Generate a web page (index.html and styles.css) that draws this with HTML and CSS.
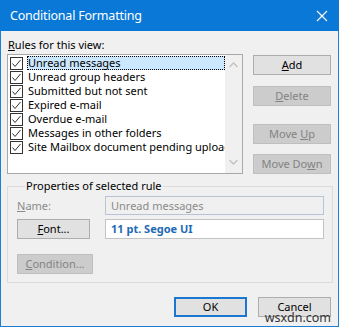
FILE: index.html
```html
<!DOCTYPE html>
<html>
<head>
<meta charset="utf-8">
<link rel="stylesheet" href="styles.css">
</head>
<body>
<div class="window">
  <div class="titlebar">
    <span class="title">Conditional Formatting</span>
    <svg class="close" width="12" height="12" viewBox="0 0 12 12"><path d="M1 1 L11 11 M11 1 L1 11" stroke="#fff" stroke-width="1.2" fill="none"/></svg>
  </div>
  <div class="content">
    <div class="top">
      <div class="rules">
        <div class="label"><u>R</u>ules for this view:</div>
        <div class="listbox">
          <div class="items">
            <div class="item selected"><span class="cb"><svg viewBox="0 0 13 13" width="13" height="13"><path d="M2.5 6.5 L5 9.5 L10.5 3" stroke="#333" stroke-width="1" fill="none"/></svg></span><span class="txt">Unread messages</span></div>
            <div class="item"><span class="cb"><svg viewBox="0 0 13 13" width="13" height="13"><path d="M2.5 6.5 L5 9.5 L10.5 3" stroke="#333" stroke-width="1" fill="none"/></svg></span><span class="txt">Unread group headers</span></div>
            <div class="item"><span class="cb"><svg viewBox="0 0 13 13" width="13" height="13"><path d="M2.5 6.5 L5 9.5 L10.5 3" stroke="#333" stroke-width="1" fill="none"/></svg></span><span class="txt">Submitted but not sent</span></div>
            <div class="item"><span class="cb"><svg viewBox="0 0 13 13" width="13" height="13"><path d="M2.5 6.5 L5 9.5 L10.5 3" stroke="#333" stroke-width="1" fill="none"/></svg></span><span class="txt">Expired e-mail</span></div>
            <div class="item"><span class="cb"><svg viewBox="0 0 13 13" width="13" height="13"><path d="M2.5 6.5 L5 9.5 L10.5 3" stroke="#333" stroke-width="1" fill="none"/></svg></span><span class="txt">Overdue e-mail</span></div>
            <div class="item"><span class="cb"><svg viewBox="0 0 13 13" width="13" height="13"><path d="M2.5 6.5 L5 9.5 L10.5 3" stroke="#333" stroke-width="1" fill="none"/></svg></span><span class="txt">Messages in other folders</span></div>
            <div class="item"><span class="cb"><svg viewBox="0 0 13 13" width="13" height="13"><path d="M2.5 6.5 L5 9.5 L10.5 3" stroke="#333" stroke-width="1" fill="none"/></svg></span><span class="txt">Site Mailbox document pending upload</span></div>
          </div>
          <div class="scrollbar">
            <svg width="9" height="6" viewBox="0 0 9 6"><path d="M0.5 5 L4.5 1 L8.5 5" stroke="#c2c2c2" stroke-width="1.3" fill="none"/></svg>
            <svg width="9" height="6" viewBox="0 0 9 6"><path d="M0.5 1 L4.5 5 L8.5 1" stroke="#c2c2c2" stroke-width="1.3" fill="none"/></svg>
          </div>
        </div>
      </div>
      <div class="side">
        <button class="btn add"><u>A</u>dd</button>
        <button class="btn disabled del"><u>D</u>elete</button>
        <button class="btn disabled up">Move <u>U</u>p</button>
        <button class="btn disabled down">Move Do<u>w</u>n</button>
      </div>
    </div>
    <fieldset class="group">
      <legend>Properties of selected rule</legend>
      <div class="row name-row">
        <span class="name-label"><u>N</u>ame:</span>
        <div class="field name-field">Unread messages</div>
      </div>
      <div class="row font-row">
        <button class="btn font-btn"><u>F</u>ont...</button>
        <div class="field font-field">11 pt. Segoe UI</div>
      </div>
      <button class="btn disabled cond-btn"><u>C</u>ondition...</button>
    </fieldset>
    <div class="footer">
      <button class="btn ok">OK</button>
      <button class="btn cancel">Cancel</button>
    </div>
  </div>
  <div class="watermark">wsxdn.com</div>
</div>
</body>
</html>
```

FILE: styles.css
```css
* { box-sizing: border-box; }
html, body { margin: 0; padding: 0; }
body {
  font-family: "Noto Sans", "Open Sans", sans-serif;
  font-size: 11px;
  color: #000;
  background: #fff;
}
.window {
  position: relative;
  width: 339px;
  height: 327px;
  background: #f0f0f0;
  border: 1px solid #1c7ed6;
  border-top: none;
  display: flex;
  flex-direction: column;
}
.titlebar {
  height: 31px;
  background: #0a78d6;
  margin: 0 -1px;
  display: flex;
  align-items: center;
  justify-content: space-between;
  padding: 0 11px 0 10px;
  color: #fff;
}
.title { font-size: 12.5px; letter-spacing: -0.2px; }
.close { display: block; }
.content {
  padding: 7px 6px 0 6px;
  display: flex;
  flex-direction: column;
  flex: 1;
}
.top {
  display: flex;
  justify-content: space-between;
}
.rules { width: 236px; }
.label { height: 14px; line-height: 14px; margin-bottom: 2px; padding-left: 1px; }
u { text-decoration: underline; text-underline-offset: 1px; }
.listbox {
  width: 236px;
  height: 120px;
  border: 1px solid #a8a8a8;
  background: #fff;
  display: flex;
}
.items {
  flex: 1;
  overflow: hidden;
  padding: 1px 0 0 2px;
}
.item {
  height: 14px;
  display: flex;
  align-items: center;
  white-space: nowrap;
}
.cb {
  width: 13px;
  height: 13px;
  border: 1px solid #333;
  background: #fff;
  flex: none;
  display: flex;
}
.cb svg { margin: -1px; }
.txt {
  margin-left: 4px;
  height: 14px;
  line-height: 14px;
  padding: 0 1px;
  flex: 1;
  overflow: hidden;
}
.item.selected .txt {
  background: #cce8ff;
  outline: 1px dotted #000;
  outline-offset: -1px;
}
.scrollbar {
  width: 17px;
  flex: none;
  background: #f0f0f0;
  display: flex;
  flex-direction: column;
  justify-content: space-between;
  align-items: center;
  padding: 7px 0 8px;
}
.scrollbar svg { display: block; }
.side {
  width: 78px;
  margin-right: 1px;
  display: flex;
  flex-direction: column;
}
.btn {
  font-family: inherit;
  font-size: 11px;
  height: 20px;
  padding: 0;
  margin: 0;
  line-height: 18px;
  background: #e1e1e1;
  border: 1px solid #adadad;
  color: #000;
  display: block;
  text-align: center;
}
.btn.disabled {
  background: #cccccc;
  border-color: #bfbfbf;
  color: #838383;
}
.side .btn { width: 78px; }
.add { margin-top: 17px; }
.del { margin-top: 11px; }
.up { margin-top: 18px; }
.down { margin-top: 10px; }
.group {
  margin: 6px 0 0 0;
  width: 325px;
  height: 103px;
  border: 1px solid #dcdcdc;
  padding: 4px 8px 0 9px;
}
.group legend {
  padding: 0 1px;
  margin-left: 8px;
  line-height: 12px;
}
.row { display: flex; align-items: center; }
.name-label { color: #8a8a8a; width: 88px; }
.field {
  width: 219px;
  margin-left: auto;
  padding-left: 5px;
  line-height: 17px;
}
.name-field {
  height: 19px;
  background: #f0f0f0;
  border: 1px solid #b7c4d6;
  color: #8a8a8a;
}
.font-row { margin-top: 4px; }
.font-btn { width: 73px; }
.font-field {
  height: 20px;
  background: #fff;
  border: 1px solid #c3c3c3;
  color: #1e6ab4;
  font-weight: bold;
  line-height: 18px;
}
.cond-btn { width: 76px; margin-top: 15px; }
.footer {
  display: flex;
  justify-content: flex-end;
  gap: 11px;
  margin-top: 14px;
  padding-right: 1px;
}
.footer .btn { width: 73px; }
.ok { border: 2px solid #1a78d2; line-height: 16px; }
.watermark {
  position: absolute;
  right: 7px;
  bottom: 1px;
  font-size: 12.5px;
  line-height: 14px;
  color: #333;
}
```
